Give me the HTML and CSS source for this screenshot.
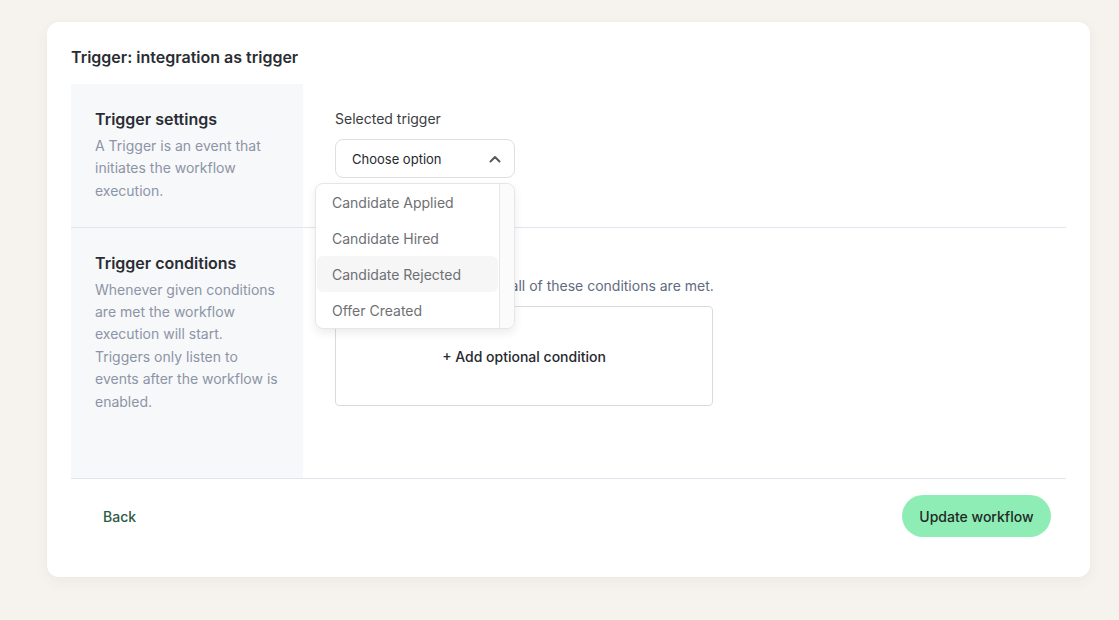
FILE: index.html
```html
<!DOCTYPE html>
<html>
<head>
<meta charset="utf-8">
<link rel="stylesheet" href="styles.css">
</head>
<body>
<div class="page">
  <div class="card">
    <h1 class="title">Trigger: integration as trigger</h1>
    <div class="section s1">
      <div class="side">
        <h2 class="side-h">Trigger settings</h2>
        <p class="side-p">A Trigger is an event that initiates the workflow execution.</p>
      </div>
      <div class="main">
        <div class="label">Selected trigger</div>
        <div class="select-wrap">
          <div class="select">
            <span>Choose option</span>
            <svg class="chev" width="12" height="8" viewBox="0 0 12 8"><path d="M1.5 6.5 L6 2 L10.5 6.5" fill="none" stroke="#555a60" stroke-width="2" stroke-linecap="round" stroke-linejoin="round"/></svg>
          </div>
          <div class="menu">
            <div class="options">
              <div class="opt">Candidate Applied</div>
              <div class="opt">Candidate Hired</div>
              <div class="opt hover">Candidate Rejected</div>
              <div class="opt">Offer Created</div>
            </div>
            <div class="track"></div>
          </div>
        </div>
      </div>
    </div>
    <div class="section s2">
      <div class="side">
        <h2 class="side-h">Trigger conditions</h2>
        <p class="side-p">Whenever given conditions are met the workflow execution will start. Triggers only listen to events after the workflow is enabled.</p>
      </div>
      <div class="main">
        <div class="label">Conditions</div>
        <p class="hint">The workflow starts when all of these conditions are met.</p>
        <div class="cond-box">+ Add optional condition</div>
      </div>
    </div>
    <div class="footer">
      <button class="back">Back</button>
      <button class="update">Update workflow</button>
    </div>
  </div>
</div>
</body>
</html>
```
FILE: styles.css
```css
* { box-sizing: border-box; }
html, body { margin: 0; padding: 0; }
body {
  background: #f6f3ee;
  font-family: Inter, "Noto Sans", sans-serif;
  width: 1119px;
  height: 620px;
  overflow: hidden;
}
.page {
  padding: 22px 29px 0 47px;
}
.card {
  background: #ffffff;
  border-radius: 12px;
  padding: 23px 24px 40px 24px;
  box-shadow: 0 4px 14px rgba(60, 50, 30, 0.06);
}
.title {
  margin: 0 0 15px 0;
  font-size: 16px;
  line-height: 24px;
  font-weight: 600;
  color: #2a2d33;
}
.section {
  display: flex;
  border-bottom: 1px solid #e3e5ee;
}
.s1 { height: 144px; }
.s2 { height: 251px; }
.side {
  width: 232px;
  flex: none;
  background: #f7f8fa;
  padding: 23px 24px 0 24px;
}
.side-h {
  margin: 0 0 4px 0;
  font-size: 16px;
  line-height: 24px;
  font-weight: 600;
  color: #2a2d33;
}
.s2 .side-h { margin-bottom: 3.5px; }
.side-p {
  margin: 0;
  font-size: 14px;
  line-height: 22.4px;
  color: #8c94a6;
}
.main {
  flex: 1;
  padding: 25px 32px 0 32px;
}
.label {
  font-size: 14px;
  line-height: 20px;
  font-weight: 400;
  color: #3a3d42;
  margin-bottom: 10px;
}
.select-wrap {
  position: relative;
  width: 180px;
}
.select {
  height: 39px;
  border: 1px solid #dcdfe4;
  border-radius: 8px;
  display: flex;
  align-items: center;
  justify-content: space-between;
  padding: 0 13px 0 16px;
  font-size: 13px;
  color: #26292e;
}
.chev { display: block; }
.menu {
  position: absolute;
  left: -20px;
  top: 44px;
  width: 200px;
  height: 146px;
  background: #ffffff;
  border: 1px solid #e4e6ea;
  border-radius: 8px;
  box-shadow: 0 4px 10px rgba(0, 0, 0, 0.08);
  display: flex;
  overflow: hidden;
  z-index: 5;
}
.options {
  flex: 1;
  padding: 0 1px;
}
.opt {
  height: 36px;
  display: flex;
  align-items: center;
  padding-left: 15px;
  font-size: 14px;
  color: #6e7073;
  border-radius: 6px;
}
.opt.hover { background: #f6f6f7; }
.track {
  width: 15px;
  flex: none;
  border-left: 1px solid #e6e7ea;
  background: #fbfbfb;
}
.s2 .main { padding-top: 24px; }
.s2 .label { margin-bottom: 3px; }
.hint {
  margin: 0 0 9px 0;
  font-size: 14px;
  line-height: 22px;
  color: #5f6b80;
  white-space: nowrap;
}
.cond-box {
  width: 378px;
  height: 100px;
  border: 1px solid #d8dbe1;
  border-radius: 4px;
  display: flex;
  align-items: center;
  justify-content: center;
  font-size: 14px;
  font-weight: 500;
  color: #26292e;
}
.footer {
  display: flex;
  justify-content: space-between;
  align-items: center;
  padding: 16px 15px 0 16px;
}
button {
  font-family: inherit;
  border: none;
  cursor: pointer;
}
.back {
  background: transparent;
  font-size: 14px;
  font-weight: 500;
  color: #2c5a44;
  padding: 0 16px;
  height: 42px;
}
.update {
  background: #8eedb5;
  color: #1f2a26;
  font-size: 14px;
  font-weight: 500;
  height: 42px;
  padding: 0 17.5px;
  border-radius: 21px;
}
```
